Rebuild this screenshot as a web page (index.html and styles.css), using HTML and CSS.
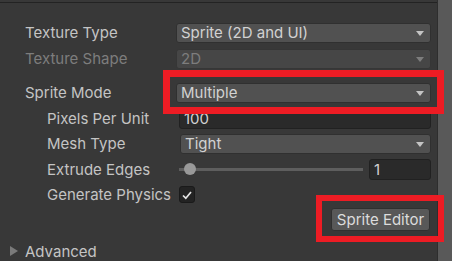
FILE: index.html
```html
<!DOCTYPE html>
<html lang="en">
<head>
    <meta charset="UTF-8">
    <meta name="viewport" content="width=device-width, initial-scale=1.0">
    <title>Texture Import Settings</title>
    <link rel="stylesheet" href="styles.css">
</head>
<body>
    <div class="inspector">
        <div class="top-line"></div>

        <div class="props">
            <!-- Texture type / shape -->
            <div class="row">
                <label class="label">Texture Type</label>
                <div class="dropdown">Sprite (2D and UI)<span class="arrow"></span></div>
            </div>
            <div class="row disabled">
                <label class="label">Texture Shape</label>
                <div class="dropdown">2D<span class="arrow"></span></div>
            </div>

            <!-- Sprite settings -->
            <div class="group">
                <div class="row">
                    <label class="label">Sprite Mode</label>
                    <div class="dropdown">Multiple<span class="arrow"></span></div>
                </div>
                <div class="row sub">
                    <label class="label">Pixels Per Unit</label>
                    <div class="field">100</div>
                </div>
                <div class="row sub">
                    <label class="label">Mesh Type</label>
                    <div class="dropdown">Tight<span class="arrow"></span></div>
                </div>
                <div class="row sub">
                    <label class="label">Extrude Edges</label>
                    <div class="slider">
                        <div class="track"><span class="thumb"></span></div>
                        <div class="field num">1</div>
                    </div>
                </div>
                <div class="row sub">
                    <label class="label">Generate Physics</label>
                    <div class="checkbox">
                        <svg width="12" height="12" viewBox="0 0 12 12"><path d="M2 6.5 L4.8 9.2 L10 3" fill="none" stroke="#e4e4e4" stroke-width="1.7"/></svg>
                    </div>
                </div>
            </div>

            <div class="button-row">
                <button class="btn">Sprite Editor</button>
            </div>

            <div class="foldout">
                <span class="fold-arrow"></span>
                <span>Advanced</span>
            </div>
        </div>
    </div>
    <div class="scrollbar"></div>

    <!-- annotation boxes drawn over the screenshot -->
    <div class="mark mark-mode"></div>
    <div class="mark mark-editor"></div>
</body>
</html>
```

FILE: styles.css
```css
body {
    margin: 0;
    width: 452px;
    height: 261px;
    overflow: hidden;
    background: #383838;
    color: #c4c4c4;
    font-family: 'Inter', 'Roboto', sans-serif;
    font-size: 15px;
    display: flex;
    position: relative;
}
.inspector {
    flex: 1;
    display: flex;
    flex-direction: column;
}
.top-line {
    height: 5px;
    border-bottom: 1px solid #232323;
}
.props {
    padding: 19px 6px 0 0;
    display: flex;
    flex-direction: column;
}
.group {
    margin-top: 13px;
    display: flex;
    flex-direction: column;
    gap: 4.5px;
}
.row {
    display: flex;
    align-items: center;
    height: 21px;
    padding-left: 25px;
}
.row + .row {
    margin-top: 5px;
}
.group .row + .row {
    margin-top: 0;
}
.label {
    width: 151px;
    flex: none;
    white-space: nowrap;
}
.row.sub {
    padding-left: 47px;
}
.row.sub .label {
    width: 132px;
}
.dropdown {
    flex: 1;
    height: 20px;
    box-sizing: border-box;
    background: #515151;
    border: 1px solid #303030;
    border-radius: 3px;
    padding-left: 4px;
    display: flex;
    align-items: center;
    position: relative;
    color: #d2d2d2;
}
.row.sub .dropdown {
    margin-left: 1px;
}
.arrow {
    position: absolute;
    right: 6px;
    top: 7px;
    width: 0;
    height: 0;
    border-left: 4px solid transparent;
    border-right: 4px solid transparent;
    border-top: 5px solid #c4c4c4;
}
.disabled .label {
    color: #7d7d7d;
}
.disabled .dropdown {
    background: #464646;
    border-color: #363636;
    color: #7d7d7d;
}
.disabled .arrow {
    border-top-color: #7d7d7d;
}
.field {
    flex: 1;
    height: 21px;
    box-sizing: border-box;
    background: #2a2a2a;
    border: 1px solid #212121;
    border-radius: 3px;
    padding-left: 4px;
    display: flex;
    align-items: center;
    color: #d2d2d2;
}
.slider {
    flex: 1;
    display: flex;
    align-items: center;
    height: 21px;
}
.track {
    flex: 1;
    height: 3px;
    background: #5e5e5e;
    position: relative;
    margin-right: 6px;
}
.thumb {
    position: absolute;
    left: 5px;
    top: -5px;
    width: 12px;
    height: 12px;
    border-radius: 50%;
    background: #999999;
}
.field.num {
    flex: none;
    width: 62px;
}
.checkbox {
    width: 16px;
    height: 17px;
    box-sizing: border-box;
    background: #232323;
    border: 1px solid #1a1a1a;
    border-radius: 3px;
    display: flex;
    align-items: center;
    justify-content: center;
}
.button-row {
    display: flex;
    justify-content: flex-end;
    margin-top: 3px;
    padding-right: 1px;
}
.btn {
    width: 99px;
    height: 23px;
    background: #585858;
    border: 1px solid #303030;
    border-radius: 3px;
    color: #dcdcdc;
    font-family: inherit;
    font-size: 15px;
    padding: 0;
}
.foldout {
    display: flex;
    align-items: center;
    height: 20px;
    margin-top: 10px;
    padding-left: 10px;
    gap: 7px;
}
.fold-arrow {
    width: 0;
    height: 0;
    border-top: 5px solid transparent;
    border-bottom: 5px solid transparent;
    border-left: 8px solid #7a7a7a;
}
.scrollbar {
    width: 15px;
    background: #595959;
    border-left: 1px solid #2e2e2e;
    box-sizing: border-box;
}
.mark {
    position: absolute;
    border: 7px solid #ed1c24;
    box-sizing: border-box;
}
.mark-mode {
    left: 163px;
    top: 70px;
    width: 281px;
    height: 44px;
}
.mark-editor {
    left: 316px;
    top: 195px;
    width: 128px;
    height: 47px;
    border-width: 6px;
}
```
